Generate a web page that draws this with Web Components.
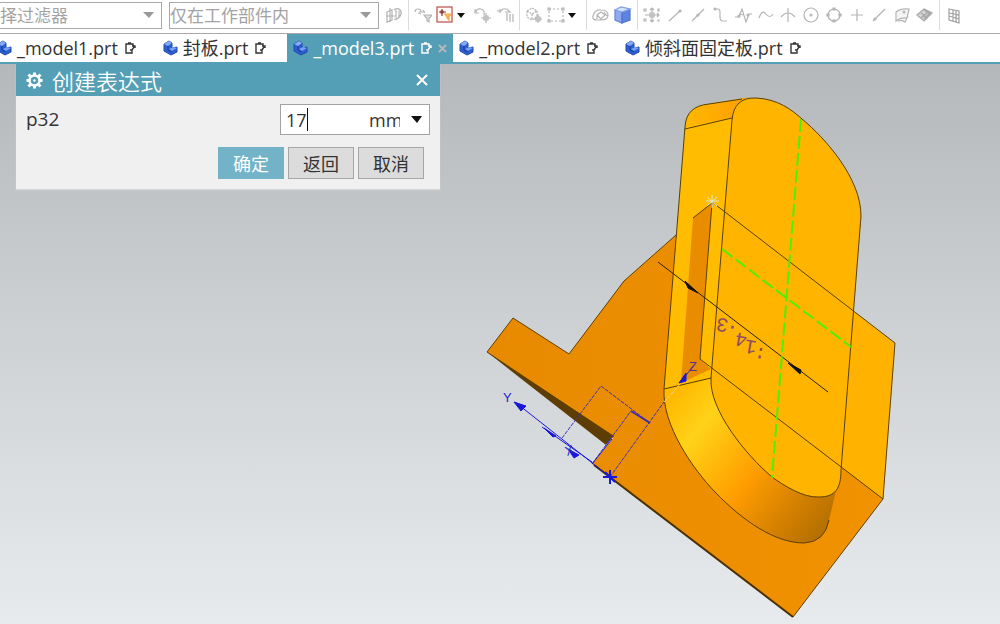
<!DOCTYPE html>
<html lang="zh-CN">
<head>
<meta charset="utf-8">
<title>_model3.prt</title>
<style>
html,body{margin:0;height:100%}
body{font-family:"Open Sans","Noto Sans CJK SC",sans-serif;font-size:18px;color:#333;overflow:hidden}
</style>
</head>
<body>
<cad-app></cad-app>

<script>
const define = (name, html, setup) => customElements.define(name, class extends HTMLElement {
  constructor() {
    super();
    const t = document.createElement('template');
    t.innerHTML = html;
    this.attachShadow({mode: 'open'}).append(t.content.cloneNode(true));
  }
  connectedCallback() { if (setup) setup(this, this.shadowRoot); }
});

const icons = {
  find: '<path d="M2 6l5-2v10l-5 2zM5 2v14M1 10h9M9 4c4-3 8 0 7 4s-5 6-7 5M11 4v8M14 5v6"/>',
  selfilter: '<path d="M1 6q0-3 3-3t3 3M5 6h6M9 4l2 3M4 7l3 1"/><path d="M10 9h8l-3 4v3l-2-1v-2z" fill="#ddd"/>',
  boxfilter: '<rect x="1" y="1" width="15" height="15" stroke="#b94f4c" fill="#fffaf6"/><path d="M6 3v7M3 6h7M5 5h2v2H5z" stroke="#863f38"/><path d="M9 8h6l-2 3v3l-2-2v-1z" fill="#f7bd60" stroke="#f0a94b"/>',
  undo: '<path d="M2 6q1-4 5-3t3 6M1 3v4h4M12 7v10M7 12h10M10 10h4v4h-4z"/>',
  hand: '<path d="M1 5h4l2-2h4l3 3H9M4 3v4M11 7v8M14 8v8M17 8v8"/>',
  cube: '<path d="M2 5l5-3 5 3v6l-5 3-5-3zM2 5l5 3 5-3M7 8v6" stroke-dasharray="2 1"/><path d="M13 8v9M9 13h8M11 11h4v4h-4z"/>',
  marquee: '<path d="M2 3h14v12H2z" stroke-dasharray="2 2"/><path d="M1 2h2v2H1zM15 2h2v2h-2zM1 14h2v2H1zM15 14h2v2h-2z"/>',
  shell: '<path d="M1 10q2-7 8-6 7 0 7 5 0 5-7 5H5q-5 0-4-4zM5 9l4-3 4 3-4 4zM12 6l3 4M5 9v4"/>',
  solid: '<path d="M1 4l7 1v12l-7-3z" fill="#8faaf0" stroke="#6685d8"/><path d="M8 5l8-1v10l-8 3z" fill="#5c83df" stroke="#5274cf"/><path d="M1 4l6-3 9 2-8 3z" fill="#cfe3ff" stroke="#809ee2"/>',
  snap: '<path d="M9 2v14M4 9h12M7 4l2-2 2 2M7 14l2 2 2-2M14 7l2 2-2 2M7 7h4v4H7zM1 3h2v2H1zM1 13h2v2H1zM15 3h1v2h-1zM15 14h1v1h-1zM2 9h2"/>',
  end: '<path d="M3 15L15 4"/><circle cx="14" cy="5" r="1"/>',
  mid: '<path d="M3 15L15 3"/><circle cx="9" cy="9" r="1"/>',
  pole: '<path d="M3 3h4q2 0 2 3v5q0 4 3 4h4"/><circle cx="4" cy="3" r="1"/>',
  spline: '<path d="M1 11h4L8 3l4 13 3-8h3M5 8l5 1"/><circle cx="14" cy="9" r="1"/><circle cx="5" cy="10" r="1"/>',
  wave: '<path d="M2 12q3-9 7-4t7 0"/>',
  cross: '<path d="M9 2v14M2 11q7-8 14 0"/>',
  center: '<circle cx="9" cy="9" r="7"/><circle cx="9" cy="9" r="1"/>',
  quad: '<circle cx="9" cy="9" r="6"/><path d="M8 2h2v2H8zM8 14h2v2H8zM2 8h2v2H2zM14 8h2v2h-2z" fill="#bbb"/>',
  plus: '<path d="M9 3v12M3 9h12"/>',
  oncurve: '<path d="M3 15L15 3"/><circle cx="5" cy="13" r="1"/>',
  face: '<path d="M3 6q5-4 13-3l-2 9q-6-1-11 3zM5 15q4-1 7 1l3-6" fill="#f4f4f4"/><circle cx="11" cy="6" r="1"/>',
  mesh: '<path d="M1 9l7-6 8 4-8 8zM5 7l7 5M8 4l7 5M5 12l8-7M8 13l7-7" fill="#d6d6d6" stroke="#a8a8a8"/>',
  grid: '<path d="M4 3l10 2v12L4 14zM8 4v11M11 5v11M4 7l10 2M4 10l10 3" stroke="#a0a0a0"/>'
};

define('tool-button', `
<style>
:host{display:flex;flex:0 0 22px;min-width:0;justify-content:center}
button{border:0;background:none;padding:0;margin:0;width:100%;height:26px;display:flex;align-items:center;justify-content:center}
svg{width:18px;height:18px;flex:none;fill:none;stroke:#b4b4b4;stroke-width:1.2}
</style><button type="button"><svg viewBox="0 0 18 18" aria-hidden="true"></svg></button>`,
(h, r) => {
  r.querySelector('svg').innerHTML = icons[h.getAttribute('icon')];
  r.querySelector('button').setAttribute('aria-label', h.getAttribute('icon'));
});

define('tool-more', `
<style>:host{display:flex;flex:0 0 16px}button{border:0;background:none;padding:0 0 0 1px;display:flex;align-items:center;height:26px;width:16px}</style>
<button type="button" aria-label="more"><svg width="8" height="5"><path d="M0 0h8l-4 5z" fill="#111"/></svg></button>`);

define('tool-group', `
<style>
:host{display:flex;align-items:center}
:host([fill]){flex:0 1 302px}
:host([fill]) ::slotted(tool-button){flex:1 1 0}
:host(:not([last]))::after{content:"";width:1px;height:30px;background:#dcdcdc;margin:0 3px}
</style><slot></slot>`);

define('filter-select', `
<style>
:host{display:grid;box-sizing:border-box;height:27px;border:1px solid #a9a9a9;background:#fff;align-items:center}
select{grid-area:1/1;appearance:none;border:0;background:none;color:#a3a3a3;font:17px/24px "Noto Sans CJK SC",sans-serif;padding:0 24px 0 0;margin:0;width:100%;height:25px;opacity:1}
svg{grid-area:1/1;justify-self:end;margin-right:7px;pointer-events:none}
</style>
<select><option></option></select>
<svg width="11" height="6" aria-hidden="true"><path d="M0 0h11l-5 6z" fill="#999"/></svg>`,
(h, r) => {
  r.querySelector('option').textContent = h.getAttribute('value');
  r.querySelector('select').setAttribute('aria-label', h.getAttribute('value'));
});

define('part-tab', `
<style>
:host{display:flex;align-items:center;height:28px;padding:0 0 0 6px;background:#fff;color:#333}
:host([active]){background:#559fb6;color:#fff}
a{display:flex;align-items:center;color:inherit;text-decoration:none;white-space:nowrap;line-height:28px}
.part{margin-right:5px}.note{margin-left:7px}
.note{fill:none;stroke:currentColor;stroke-width:1.4}
.end{width:21px;display:flex;justify-content:center}
button{display:none;border:0;background:none;padding:0;color:#b9b5bd}
:host([active]) button{display:flex}
</style>
<a href="#">
<svg class="part" width="15" height="16" viewBox="0 0 15 16" aria-hidden="true"><path d="M1 4l5-3 3 2v5l5-1v5l-6 3-7-4z" fill="#2c5fd0" stroke="#2348ab"/><path d="M1 4l5-3 3 2-4 3z" fill="#86aaf5"/><path d="M6 9l4-2 4 1-5 3z" fill="#79a0f3"/><path d="M5 6v4l4 2" fill="none" stroke="#143891"/></svg>
<slot></slot>
<svg class="note" width="11" height="12" viewBox="0 0 11 12" aria-hidden="true"><path d="M7 8v3H1V2h7v2M3 1h3M5 8h2l2-3M7 4h3v2"/></svg>
</a>
<span class="end"><button type="button" aria-label="close"><svg width="9" height="9" fill="none" stroke="currentColor" stroke-width="2"><path d="M1 1l7 7M8 1L1 8"/></svg></button></span>`);

define('push-button', `
<style>
:host{display:block}
button{box-sizing:border-box;width:66px;height:32px;padding:0;border:1px solid #a6a6a6;background:#dcdcdc;color:#333;font:18px/28px "Noto Sans CJK SC",sans-serif}
:host([primary]) button{background:#73b3c8;border-color:#73b3c8;color:#fff}
</style><button type="button"><slot></slot></button>`);

define('expression-dialog', `
<style>
:host{display:block;width:424px;background:#f0f0f0;box-shadow:0 1px 1px #d5d8da}
header{display:flex;align-items:center;height:32px;padding:0 12px 0 10px;background:#559fb6;color:#fff}
h1{margin:0 0 0 9px;flex:1;font:350 22px/32px "Noto Sans CJK SC",sans-serif}
header button{border:0;background:none;padding:0;display:flex}
.row{display:flex;align-items:center;justify-content:space-between;padding:8px 10px 0}
.field{display:flex;align-items:center;box-sizing:border-box;width:150px;height:31px;border:1px solid #a3a3a3;background:#fff}
input,select{border:0;background:none;margin:0;padding:0;font:inherit;color:inherit;outline:0;appearance:none}
input{width:21px;margin-left:5px;height:27px}
.caret{width:1px;height:23px;background:#111;margin-right:auto}
.unit{display:grid;align-items:center;width:60px}
.unit select{grid-area:1/1;width:60px;height:27px;padding-right:29px;text-overflow:clip;overflow:hidden}
.unit svg{grid-area:1/1;justify-self:end;margin-right:7px;pointer-events:none}
footer{display:flex;justify-content:flex-end;gap:4px;padding:12px 16px 10px}
label{font-size:19px;line-height:31px}
</style>
<header>
<svg width="17" height="17" viewBox="0 0 34 34" fill="none" stroke="#fff" aria-hidden="true"><circle cx="17" cy="17" r="10" stroke-width="5"/><circle cx="17" cy="17" r="2" fill="#fff"/><path stroke-width="6" d="M17 1v5M17 28v5M1 17h5M28 17h5M5 5l4 4M25 25l4 4M5 29l4-4M25 9l4-4"/></svg>
<h1>创建表达式</h1>
<button type="button" aria-label="close"><svg width="12" height="12" fill="none" stroke="#fff" stroke-width="2"><path d="M1 1l10 10M11 1L1 11"/></svg></button>
</header>
<div class="row"><label for="v">p32</label>
<div class="field"><input id="v" value="17"><span class="caret"></span>
<span class="unit"><select aria-label="unit"><option>mm</option></select><svg width="11" height="7"><path d="M0 0h11l-5 7z" fill="#111"/></svg></span></div></div>
<footer><push-button primary>确定</push-button><push-button>返回</push-button><push-button>取消</push-button></footer>`);

define('model-view', `
<style>
:host{display:grid;position:relative;min-height:0;background:linear-gradient(#b4b8ba,#cdd0d3 45%,#e8ebed)}
svg{width:100%;height:100%;display:block;min-height:0}
slot{display:block;position:absolute;left:16px;top:0}
</style>
<svg viewBox="0 64 1000 560" preserveAspectRatio="xMidYMin meet" fill="none" stroke-width="1" role="img" aria-label="model">
<defs>
<linearGradient id="band" gradientUnits="userSpaceOnUse" x1="675" y1="395" x2="832" y2="520">
<stop offset="0" stop-color="#ffba00"/><stop offset=".2" stop-color="#ffd219"/><stop offset=".4" stop-color="#ffb408"/><stop offset=".55" stop-color="#ff9d00"/><stop offset=".78" stop-color="#d98300"/><stop offset="1" stop-color="#b57000"/></linearGradient>
<linearGradient id="cap" x1="0" x2="1"><stop offset="0" stop-color="#ffb900"/><stop offset="1" stop-color="#ff9c00"/></linearGradient>
<linearGradient id="base" x1="0" x2="1"><stop offset="0" stop-color="#e78a00"/><stop offset="1" stop-color="#f19200"/></linearGradient>
</defs>
<path d="M487 352L513 318 569 354 624 281 676 235 712 300 883 499 793 617 592 464 614 437z" fill="url(#base)"/>
<path d="M487 352L614 436 606 445z" fill="#5e3d05"/>
<path d="M712 202L895 343 883 499 700 359z" fill="#ffb300"/>
<path d="M487 352L513 318 569 354 624 281 676 235M487 352L614 437M895 343L883 499 793 617" stroke="#604000"/>
<path d="M594 465L793 617" stroke="#4a2f00" stroke-width="2"/>
<path d="M664 389C662 425 693 469 715 492C743 521 775 543 804 543Q825 542 829 520L841 470 711 378z" fill="url(#band)"/>
<path d="M685 127Q686 106 709 104L742 99 732 120 711 378 664 389z" fill="#ffbc00"/>
<path d="M685 127Q686 106 709 104L750 97Q734 101 732 118z" fill="url(#cap)"/>
<path d="M693 218L712 203 700 359 711 369 681 383z" fill="#e98c00"/>
<path d="M712 203L732 130 711 369 700 359z" fill="#ffbc00"/>
<path d="M732 120Q734 97 756 98C778 99 792 110 802 119C825 138 861 178 861 216L841 470C841 489 835 497 819 497C803 498 783 485 772 477C746 455 709 410 711 378z" fill="#ffb400"/>
<g stroke="#5a3f00">
<path d="M664 389C662 425 693 469 715 492C743 521 775 543 804 543Q825 542 829 520"/>
<path d="M664 389L685 127Q686 106 709 104L742 99M685 129L732 118M664 389L711 378"/>
<path d="M732 120Q734 97 756 98C778 99 792 110 802 119C825 138 861 178 861 216L841 470C841 489 835 497 819 497C803 498 783 485 772 477C746 455 709 410 711 378z"/>
<path d="M693 218L712 203 700 359M712 202L895 343M700 359L883 499" />
</g>
<path d="M658 262L828 392" stroke="#2c2000"/>
<path d="M685 281L698 293 688 288zM788 363L801 370 800 374z" fill="#111" stroke="#111"/>
<g stroke="#4cf000" stroke-width="2" stroke-dasharray="13 4"><path d="M801 119L772 478M722 249L851 347"/></g>
<path d="M712 195v13M706 201h13M707 197l10 9M717 197l-10 9" stroke="#dce8da"/>
<text transform="translate(767 349) rotate(218)" rotate="-28" font-family="Liberation Mono,monospace" font-size="20" fill="#904c66">:14.3</text>
<g stroke="#4030b0" stroke-dasharray="4 1">
<path d="M562 438L601 386 650 423M592 464L631 411 650 423"/><path d="M610 477L664 402"/></g>
<path d="M631 411L650 423" stroke="#4030b0" stroke-width="2"/>
<path d="M664 402L681 383" stroke="#e8d0a0" stroke-dasharray="4 1"/><path d="M684 378L693 366" stroke="#4030b0"/>
<g stroke="#1a18d8" fill="#1a18d8"><path d="M515 402L610 477M542 427L592 462"/><path d="M514 402L526 406 521 411zM568 449L579 455 574 458zM679 383L686 373 686 381zM544 428L556 436 553 437z"/><path d="M610 470v14M603 477h14M605 472l10 10" fill="none" stroke-width="2"/><path d="M592 464L612 439" fill="none"/></g>
<g font-family="Liberation Sans,sans-serif" font-size="13" fill="#2624cc"><text x="503" y="402">Y</text><text x="689" y="371" fill="#553099">Z</text><text transform="translate(567 456) rotate(-20)">X</text></g>
</svg>
<slot></slot>`);

define('cad-app', `
<style>
:host{display:flex;flex-direction:column;height:100vh;background:#fff}
nav{display:flex;align-items:center;height:33px;flex:none;border-bottom:1px solid #a8a8a8;box-sizing:content-box}
.tools{display:flex;align-items:center;flex:1;min-width:0;margin-left:4px;padding-bottom:3px}
filter-select{margin-bottom:3px}
.kind{width:162px;border-left:0}
.scope{width:210px;margin-left:7px}
.tabs{display:flex;flex:none;margin-left:-9px;height:28px}
.line{height:2px;flex:none;background:#559fb6}
model-view{flex:1}
</style>
<nav>
<filter-select class="kind" value="择过滤器"></filter-select><filter-select class="scope" value="仅在工作部件内"></filter-select>
<div class="tools">
<tool-group><tool-button icon="find"></tool-button></tool-group>
<tool-group><tool-button icon="selfilter"></tool-button><tool-button icon="boxfilter"></tool-button><tool-more></tool-more><tool-button icon="undo"></tool-button><tool-button icon="hand"></tool-button></tool-group>
<tool-group><tool-button icon="cube"></tool-button><tool-button icon="marquee"></tool-button><tool-more></tool-more></tool-group>
<tool-group><tool-button icon="shell"></tool-button><tool-button icon="solid"></tool-button></tool-group>
<tool-group fill><tool-button icon="snap"></tool-button><tool-button icon="end"></tool-button><tool-button icon="mid"></tool-button><tool-button icon="pole"></tool-button><tool-button icon="spline"></tool-button><tool-button icon="wave"></tool-button><tool-button icon="cross"></tool-button><tool-button icon="center"></tool-button><tool-button icon="quad"></tool-button><tool-button icon="plus"></tool-button><tool-button icon="oncurve"></tool-button><tool-button icon="face"></tool-button><tool-button icon="mesh"></tool-button></tool-group>
<tool-group last><tool-button icon="grid"></tool-button></tool-group>
</div></nav>
<div class="tabs"><part-tab>_model1.prt</part-tab><part-tab>封板.prt</part-tab><part-tab active>_model3.prt</part-tab><part-tab>_model2.prt</part-tab><part-tab>倾斜面固定板.prt</part-tab></div>
<div class="line"></div>
<model-view><expression-dialog></expression-dialog></model-view>`);
</script>
</body>
</html>
